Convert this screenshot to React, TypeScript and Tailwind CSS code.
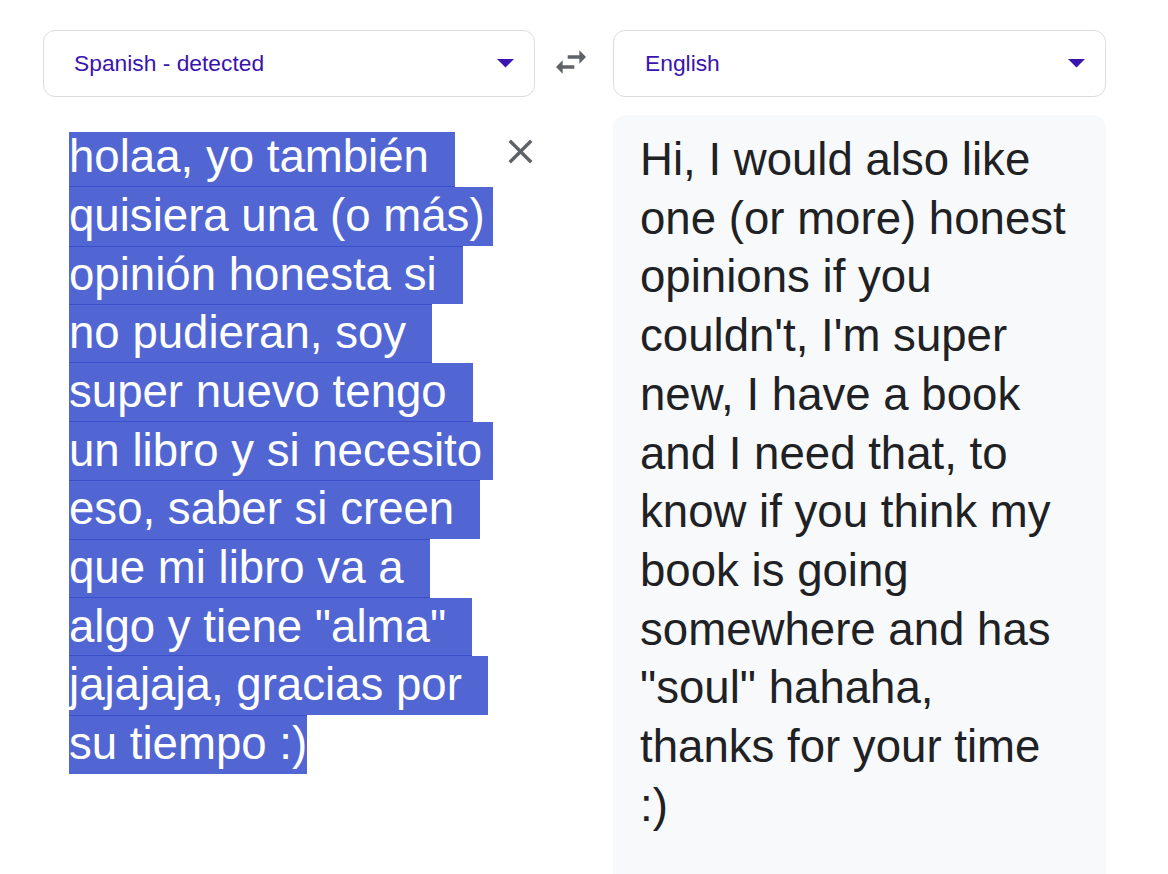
import React from "react";

const leftLines = [
  "holaa, yo también",
  "quisiera una (o más)",
  "opinión honesta si",
  "no pudieran, soy",
  "super nuevo tengo",
  "un libro y si necesito",
  "eso, saber si creen",
  "que mi libro va a",
  'algo y tiene "alma"',
  "jajajaja, gracias por",
  "su tiempo :)",
];

// where to draw the thin darker seam between selected lines
const seams: Array<"none" | "top" | "bottom" | "both"> = [
  "bottom",
  "none",
  "top",
  "both",
  "bottom",
  "none",
  "top",
  "both",
  "bottom",
  "none",
  "top",
];

const rightLines = [
  "Hi, I would also like",
  "one (or more) honest",
  "opinions if you",
  "couldn't, I'm super",
  "new, I have a book",
  "and I need that, to",
  "know if you think my",
  "book is going",
  "somewhere and has",
  '"soul" hahaha,',
  "thanks for your time",
  ":)",
];

function Caret() {
  return (
    <svg width="17" height="9" viewBox="0 0 17 9" className="shrink-0">
      <polygon points="0,0 17,0 8.5,8.5" fill="#3a14ae" />
    </svg>
  );
}

function LangSelect({ label, padLeft }: { label: string; padLeft: string }) {
  return (
    <div
      className={`h-[67px] rounded-[12px] border border-[#dadce0] bg-white flex items-center justify-between pr-[20px] ${padLeft}`}
    >
      <span className="text-[22.8px] leading-[26px] -mt-[1px] text-[#3a14ae]">{label}</span>
      <Caret />
    </div>
  );
}

export default function App() {
  return (
    <div className="w-[1168px] h-[874px] overflow-hidden bg-white [font-family:'Liberation_Sans',Arial,sans-serif]">
      <div className="flex pt-[30px] pl-[43px]">
        {/* Source column */}
        <div className="w-[492px] shrink-0 flex flex-col">
          <LangSelect label="Spanish - detected" padLeft="pl-[30px]" />
          <div className="flex">
            <div className="w-[457px] shrink-0 pl-[26px] pt-[31.3px]">
              {leftLines.map((line, i) => {
                const last = i === leftLines.length - 1;
                const s = seams[i];
                const shadow =
                  s === "top"
                    ? "shadow-[inset_0_1px_0_#3b4fcb]"
                    : s === "bottom"
                    ? "shadow-[inset_0_-1px_0_#3b4fcb]"
                    : s === "both"
                    ? "shadow-[inset_0_1px_0_#3b4fcb,inset_0_-1px_0_#3b4fcb]"
                    : "";
                const bg =
                  i === 0
                    ? "bg-[linear-gradient(to_bottom,transparent_3.7px,#5166d3_3.7px)]"
                    : "bg-[#5166d3]";
                return (
                  <div
                    key={i}
                    className={`w-fit max-w-[424px] whitespace-pre h-[58.7px] text-[45.6px] leading-[58.7px] text-white ${last ? "" : "pr-[26px]"} ${bg} ${i === 0 ? "" : shadow}`}
                  >
                    {i === 0 ? (
                      <span className="block shadow-[inset_0_-1px_0_#3b4fcb] -mr-[26px] pr-[26px]">{line}</span>
                    ) : (
                      line
                    )}
                  </div>
                );
              })}
            </div>
            <button className="mt-[34px] w-[41px] h-[41px] shrink-0 flex items-center justify-center">
              <svg width="41" height="41" viewBox="0 0 24 24">
                <path
                  d="M19 6.41L17.59 5 12 10.59 6.41 5 5 6.41 10.59 12 5 17.59 6.41 19 12 13.41 17.59 19 19 17.59 13.41 12z"
                  fill="#5f6368"
                />
              </svg>
            </button>
          </div>
        </div>

        {/* Swap */}
        <div className="w-[78px] shrink-0 pt-[12px] pl-[16px]">
          <svg width="40" height="40" viewBox="0 0 24 24">
            <path
              d="M6.99 11L3 15l3.99 4v-3H14v-2H6.99v-3zM21 9l-3.99-4v3H10v2h7.01v3L21 9z"
              fill="#5f6368"
            />
          </svg>
        </div>

        {/* Target column */}
        <div className="w-[493px] shrink-0 flex flex-col">
          <LangSelect label="English" padLeft="pl-[31px]" />
          <div className="mt-[18px] h-[800px] rounded-t-[13px] bg-[#f8f9fa] pl-[27px] pt-[16px]">
            {rightLines.map((line, i) => (
              <div
                key={i}
                className="whitespace-pre text-[45.6px] leading-[58.7px] text-[#202124]"
              >
                {line}
              </div>
            ))}
          </div>
        </div>
      </div>
    </div>
  );
}
